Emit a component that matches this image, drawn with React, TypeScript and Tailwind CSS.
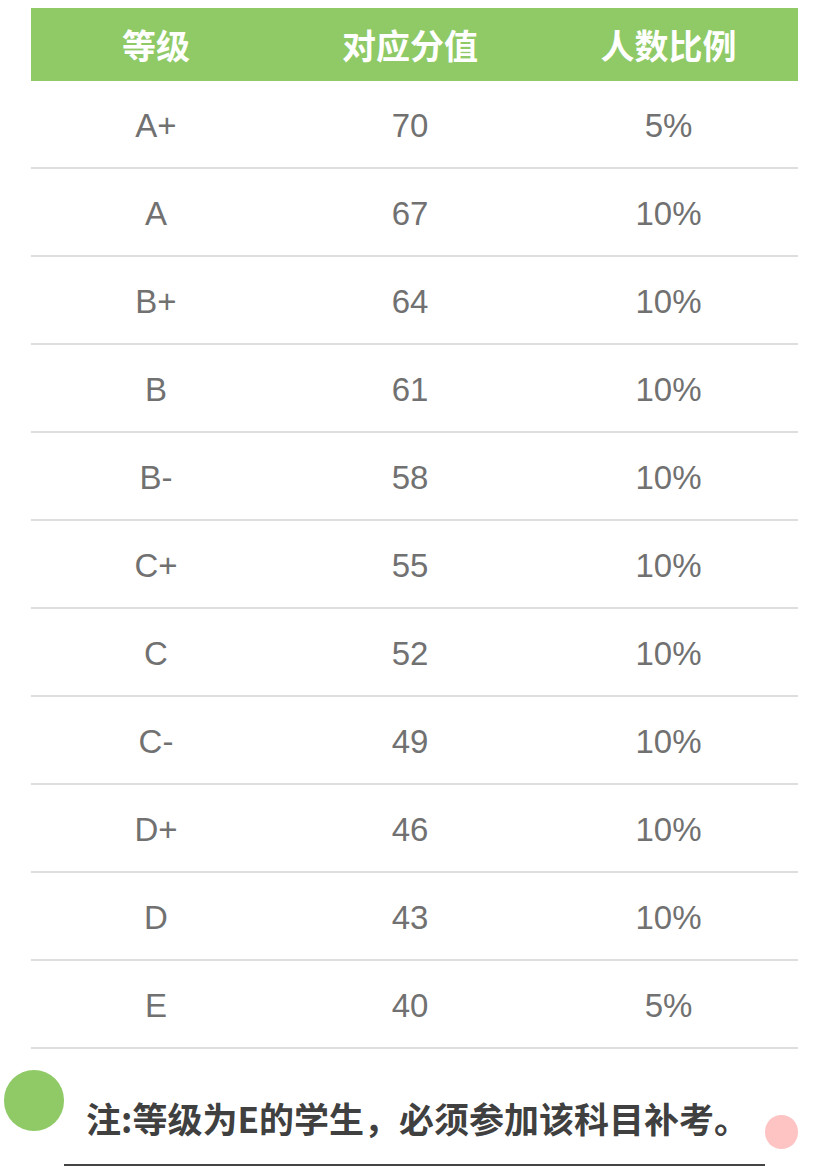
const ROWS = [
  { grade: 'A+', score: '70', pct: '5%' },
  { grade: 'A', score: '67', pct: '10%' },
  { grade: 'B+', score: '64', pct: '10%' },
  { grade: 'B', score: '61', pct: '10%' },
  { grade: 'B-', score: '58', pct: '10%' },
  { grade: 'C+', score: '55', pct: '10%' },
  { grade: 'C', score: '52', pct: '10%' },
  { grade: 'C-', score: '49', pct: '10%' },
  { grade: 'D+', score: '46', pct: '10%' },
  { grade: 'D', score: '43', pct: '10%' },
  { grade: 'E', score: '40', pct: '5%' },
];

const CJK = "font-['Noto_Sans_CJK_SC',sans-serif]";

export default function App() {
  return (
    <div className="w-[814px] h-[1175px] bg-white overflow-hidden pt-2">
      <div className="ml-[31px] mr-4">
        <div
          className={`grid grid-cols-[250px_258px_1fr] h-[73px] items-center bg-[#8fca67] text-white font-bold text-[34px] ${CJK}`}
        >
          <div className="text-center">等级</div>
          <div className="text-center">对应分值</div>
          <div className="text-center">人数比例</div>
        </div>
        {ROWS.map((r) => (
          <div
            key={r.grade}
            className="grid grid-cols-[250px_258px_1fr] h-[88px] pt-[3px] items-center border-b-2 border-[#dedede] text-[33px] text-[#717171] font-['Liberation_Sans',Arial,sans-serif]"
          >
            <div className="text-center">{r.grade}</div>
            <div className="text-center">{r.score}</div>
            <div className="text-center">{r.pct}</div>
          </div>
        ))}
      </div>

      <div className="flex mt-[21px] ml-1 mr-4">
        <span className="w-[60px] h-[61px] rounded-full bg-[#8fca67] shrink-0" />
        <div className="flex-1 border-b-2 border-[#444] pt-[28px] pb-[26px] pl-[22px]">
          <p className={`text-[35px] leading-[40px] font-bold text-[#404040] whitespace-nowrap ${CJK}`}>
            注:等级为E的学生，必须参加该科目补考。
          </p>
        </div>
        <span className="w-[33px] h-[34px] rounded-full bg-[#fec3c3] shrink-0 mt-[45px]" />
      </div>
    </div>
  );
}
